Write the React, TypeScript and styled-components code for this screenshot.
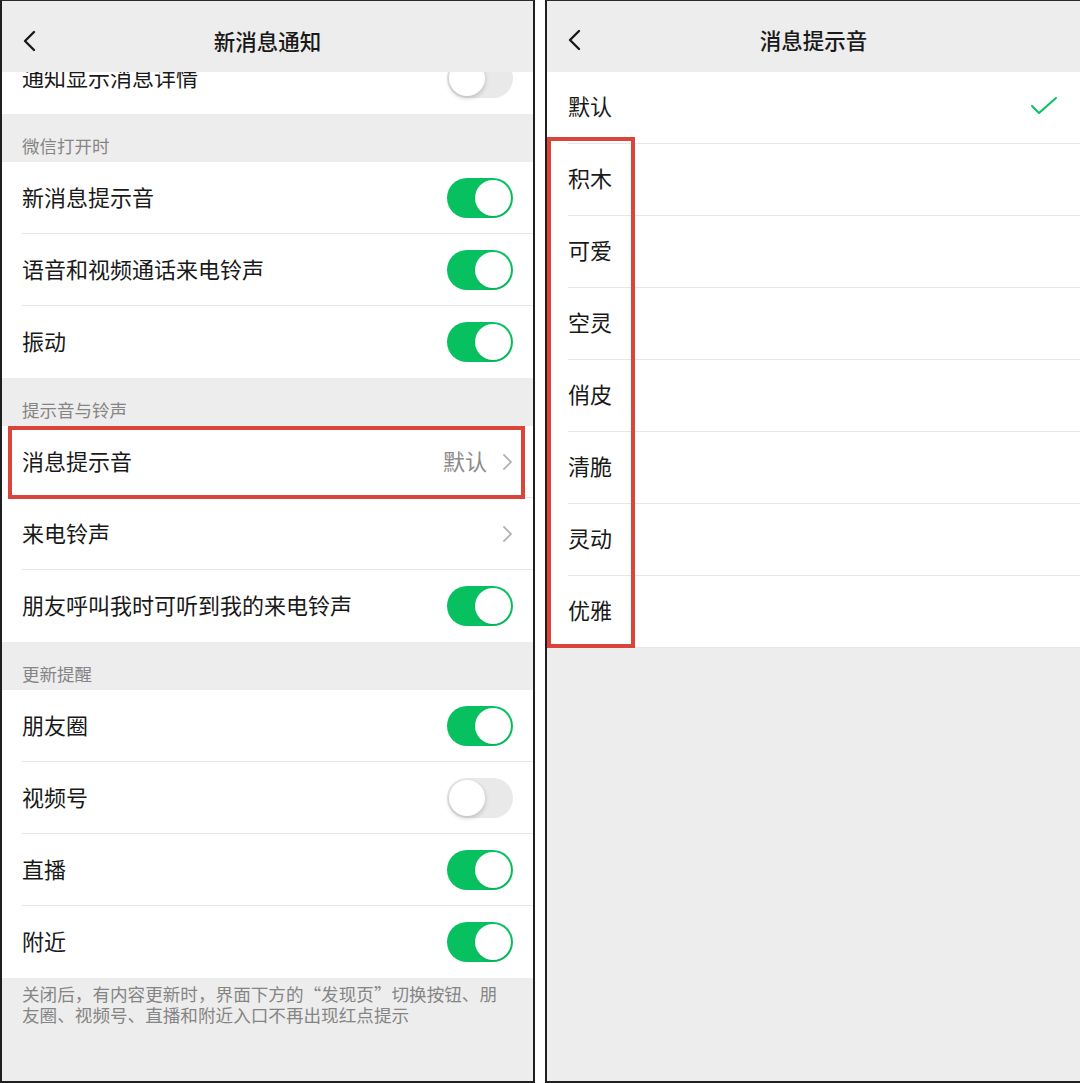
import React from 'react';
import styled, { createGlobalStyle } from 'styled-components';

const GlobalStyle = createGlobalStyle`
  * { box-sizing: border-box; }
  body {
    margin: 0;
    background: #fff;
    font-family: "Noto Sans CJK SC", "Noto Sans", sans-serif;
  }
`;

const Page = styled.div`
  display: flex;
  gap: 10px;
  width: 1080px;
  height: 1083px;
  background: #fff;
`;

const Screen = styled.div<{ $first?: boolean }>`
  display: flex;
  flex-direction: column;
  width: ${(p) => (p.$first ? '535px' : 'auto')};
  flex: ${(p) => (p.$first ? 'none' : '1')};
  height: 1083px;
  background: #ededed;
  overflow: hidden;
  border-top: 1px solid #2a2a2a;
  border-bottom: 2px solid #1f1f1f;
  border-left: 2px solid #1f1f1f;
  border-right: ${(p) => (p.$first ? '2px solid #1f1f1f' : 'none')};
`;

const NavBar = styled.div<{ $drop: number }>`
  display: grid;
  grid-template-columns: 70px 1fr 70px;
  align-items: center;
  height: 71px;
  flex: none;
  background: #ededed;
  padding: ${(p) => p.$drop}px 0 0 20px;
`;

const NavTitle = styled.div`
  text-align: center;
  font-size: 21.5px;
  font-weight: 500;
  color: #191919;
  margin-left: -20px;
`;

const BackIcon = () => (
  <svg width="16" height="22" viewBox="0 0 16 22">
    <path d="M12 2 L3 11 L12 20" fill="none" stroke="#1a1a1a" strokeWidth="2.4" strokeLinecap="round" strokeLinejoin="round" />
  </svg>
);

const Clip = styled.div`
  height: 42px;
  overflow: hidden;
  background: #fff;
  flex: none;
`;

const SectionHeader = styled.div`
  display: flex;
  align-items: flex-end;
  height: 48px;
  padding: 0 20px 4px;
  font-size: 17.5px;
  line-height: 24px;
  color: #858585;
  flex: none;
`;

const Group = styled.div`
  background: #fff;
  position: relative;
  flex: none;
`;

const Row = styled.div<{ $inset?: number; $shift?: number }>`
  position: relative;
  display: flex;
  align-items: center;
  justify-content: space-between;
  height: 72px;
  padding: 0 20px 0 ${(p) => p.$inset ?? 20}px;
  margin-top: ${(p) => p.$shift ?? 0}px;
  background: #fff;
  font-size: 22px;
  color: #191919;

  &:not(:last-child)::after {
    content: '';
    position: absolute;
    left: ${(p) => p.$inset ?? 20}px;
    right: 0;
    bottom: 0;
    height: 1px;
    background: #e7e7e7;
  }
`;

const Label = styled.span<{ $lift?: number }>`
  padding-bottom: ${(p) => p.$lift ?? 4}px;
`;

const Trail = styled.div`
  display: flex;
  align-items: center;
  gap: 14px;
  color: #8a8a8a;
`;

const Track = styled.div<{ $on: boolean }>`
  position: relative;
  width: 66px;
  height: 40px;
  border-radius: 20px;
  background: ${(p) => (p.$on ? '#07c160' : '#e9e9e9')};
  flex: none;
`;

const Knob = styled.div<{ $on: boolean }>`
  position: absolute;
  top: 2px;
  left: ${(p) => (p.$on ? '28px' : '2px')};
  width: 36px;
  height: 36px;
  border-radius: 50%;
  background: #fff;
  box-shadow: ${(p) => (p.$on ? '0 1px 2px rgba(0,0,0,0.12)' : '0 2px 5px rgba(0,0,0,0.2)')};
`;

const Switch = ({ on }: { on: boolean }) => (
  <Track $on={on}>
    <Knob $on={on} />
  </Track>
);

const Chevron = () => (
  <svg width="12" height="18" viewBox="0 0 12 18">
    <path d="M3 2 L10 9 L3 16" fill="none" stroke="#b5b5b5" strokeWidth="1.8" strokeLinecap="round" strokeLinejoin="round" />
  </svg>
);

const Check = () => (
  <svg width="28" height="20" viewBox="0 0 28 20" style={{ marginTop: -4, marginRight: 2 }}>
    <path d="M2 10 L9 17 L26 2" fill="none" stroke="#07c160" strokeWidth="2" strokeLinecap="round" strokeLinejoin="round" />
  </svg>
);

const Highlight = styled.div<{ $top: string; $left: string; $right?: string; $width?: string; $bottom: string }>`
  position: absolute;
  top: ${(p) => p.$top};
  left: ${(p) => p.$left};
  right: ${(p) => p.$right ?? 'auto'};
  width: ${(p) => p.$width ?? 'auto'};
  bottom: ${(p) => p.$bottom};
  border: 4px solid #d9453a;
  pointer-events: none;
  z-index: 2;
`;

const Footer = styled.div`
  padding: 5px 20px 0;
  font-size: 17.6px;
  line-height: 21px;
  color: #858585;
`;

const FooterLine = styled.div`
  height: 21px;
  white-space: nowrap;
`;

const List = styled.div`
  position: relative;
  background: #fff;
  flex: none;
`;

type Item = { label: string; on?: boolean };

const openItems: Item[] = [
  { label: '新消息提示音', on: true },
  { label: '语音和视频通话来电铃声', on: true },
  { label: '振动', on: true },
];

const updateItems: Item[] = [
  { label: '朋友圈', on: true },
  { label: '视频号', on: false },
  { label: '直播', on: true },
  { label: '附近', on: true },
];

const tones = ['默认', '积木', '可爱', '空灵', '俏皮', '清脆', '灵动', '优雅'];

const SettingRow = ({ item }: { item: Item }) => (
  <Row>
    <Label>{item.label}</Label>
    <Switch on={!!item.on} />
  </Row>
);

const App: React.FC = () => (
  <>
    <GlobalStyle />
    <Page>
      <Screen $first>
        <NavBar $drop={8}>
          <BackIcon />
          <NavTitle>新消息通知</NavTitle>
          <span />
        </NavBar>
        <Clip>
          <Row $shift={-30}>
            <Label>通知显示消息详情</Label>
            <Switch on={false} />
          </Row>
        </Clip>

        <SectionHeader>微信打开时</SectionHeader>
        <Group>
          {openItems.map((it) => (
            <SettingRow key={it.label} item={it} />
          ))}
        </Group>

        <SectionHeader>提示音与铃声</SectionHeader>
        <Group>
          <Row>
            <Label>消息提示音</Label>
            <Trail>
              <Label>默认</Label>
              <Chevron />
            </Trail>
            <Highlight $top="0" $bottom="-1px" $left="6px" $right="8px" />
          </Row>
          <Row>
            <Label>来电铃声</Label>
            <Trail>
              <Chevron />
            </Trail>
          </Row>
          <SettingRow item={{ label: '朋友呼叫我时可听到我的来电铃声', on: true }} />
        </Group>

        <SectionHeader>更新提醒</SectionHeader>
        <Group>
          {updateItems.map((it) => (
            <SettingRow key={it.label} item={it} />
          ))}
        </Group>
        <Footer>
          <FooterLine>关闭后，有内容更新时，界面下方的“发现页”切换按钮、朋</FooterLine>
          <FooterLine>友圈、视频号、直播和附近入口不再出现红点提示</FooterLine>
        </Footer>
      </Screen>

      <Screen>
        <NavBar $drop={6}>
          <BackIcon />
          <NavTitle>消息提示音</NavTitle>
          <span />
        </NavBar>
        <List>
          {tones.map((t, i) => (
            <Row key={t} $inset={21}>
              <Label $lift={6}>{t}</Label>
              {i === 0 && <Check />}
            </Row>
          ))}
          <Highlight $top="65px" $bottom="0" $left="0" $width="88px" />
        </List>
      </Screen>
    </Page>
  </>
);

export default App;
